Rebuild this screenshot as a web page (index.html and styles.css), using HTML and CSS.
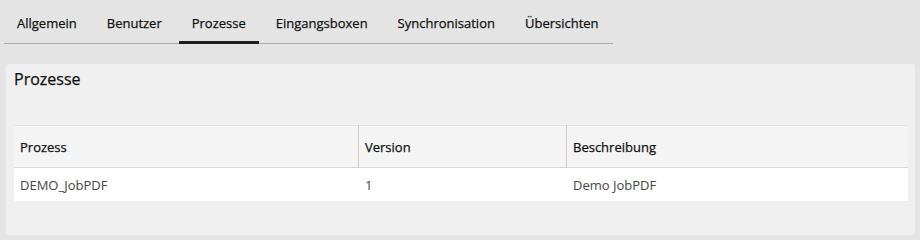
FILE: index.html
```html
<!DOCTYPE html>
<html lang="de">
<head>
<meta charset="utf-8">
<title>Prozesse</title>
<link rel="stylesheet" href="styles.css">
</head>
<body>
<nav class="tabs">
  <a class="tab">Allgemein</a>
  <a class="tab">Benutzer</a>
  <a class="tab active">Prozesse</a>
  <a class="tab">Eingangsboxen</a>
  <a class="tab">Synchronisation</a>
  <a class="tab">Übersichten</a>
</nav>
<section class="card">
  <h2 class="card-title">Prozesse</h2>
  <div class="table">
    <div class="row head">
      <div class="cell">Prozess</div>
      <div class="cell">Version</div>
      <div class="cell">Beschreibung</div>
    </div>
    <div class="row body">
      <div class="cell">DEMO_JobPDF</div>
      <div class="cell">1</div>
      <div class="cell">Demo JobPDF</div>
    </div>
  </div>
</section>
</body>
</html>
```

FILE: styles.css
```css
* { box-sizing: border-box; }
html, body {
  margin: 0;
  background: #e4e4e4;
  font-family: "Open Sans", "Liberation Sans", sans-serif;
}
.tabs {
  display: flex;
  width: 609px;
  height: 44px;
  margin-left: 4px;
  border-bottom: 1px solid #aaaaaa;
}
.tab {
  display: block;
  height: 44px;
  margin-right: 4px;
  padding: 13px 13px 8px;
  line-height: 20px;
  font-size: 13px;
  font-weight: 400;
  color: #111;
  -webkit-text-stroke: 0.25px #111;
  border-bottom: 3px solid transparent;
}
.tab.active { border-bottom-color: #1f1f1f; }
.card {
  width: 909px;
  height: 171px;
  margin: 20px 0 0 6px;
  padding: 4px 7px 0 8px;
  background: #efefef;
  border-radius: 3px;
}
.card-title {
  margin: 0;
  font-size: 16px;
  line-height: 23px;
  font-weight: 400;
  color: #111;
  -webkit-text-stroke: 0.25px #111;
}
.table { margin-top: 34px; }
.row {
  display: grid;
  grid-template-columns: 344px 208px 342px;
}
.row.head {
  height: 43px;
  background: #f4f4f4;
  border-top: 1px solid #e2e2e2;
  border-bottom: 1px solid #d8d8d8;
  color: #111;
  -webkit-text-stroke: 0.25px #111;
}
.row.body {
  height: 33px;
  background: #fff;
  color: #444;
}
.cell {
  display: flex;
  align-items: center;
  padding-left: 6px;
  font-size: 13px;
  border-left: 1px solid transparent;
}
.cell:first-child { border-left: 0; }
.row.head .cell + .cell { border-left-color: #cccccc; }
.row.head .cell { margin: -1px 0; }
```
